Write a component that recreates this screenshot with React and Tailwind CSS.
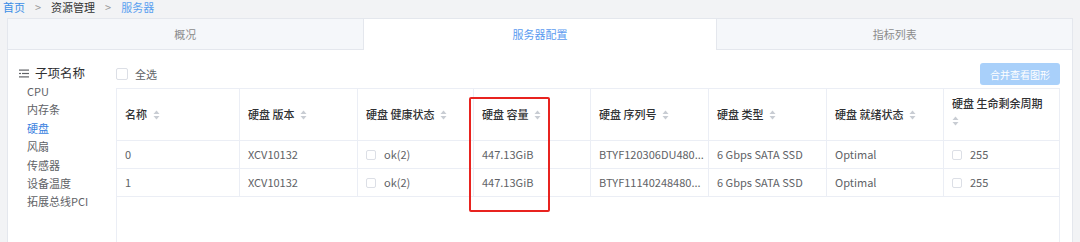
import React from 'react';

const font = { fontFamily: '"Noto Sans CJK SC", "Noto Sans", sans-serif' };

const SortIcon = () => (
  <svg width="7" height="10" viewBox="0 0 7 10" className="shrink-0">
    <path d="M3.5 0.5 L6.5 4 L0.5 4 Z" fill="#c8ccd3" />
    <path d="M3.5 9.5 L6.5 6 L0.5 6 Z" fill="#c8ccd3" />
  </svg>
);

const ListIcon = () => (
  <svg width="10" height="9" viewBox="0 0 10 9" className="shrink-0">
    <rect x="0" y="0.5" width="10" height="1.2" fill="#606266" />
    <rect x="0" y="3.9" width="2" height="1.2" fill="#606266" />
    <rect x="3" y="3.9" width="7" height="1.2" fill="#606266" />
    <rect x="0" y="7.3" width="10" height="1.2" fill="#606266" />
  </svg>
);

const Box = ({ size = 'w-[10px] h-[10px]' }) => (
  <span className={`${size} inline-block shrink-0 border border-[#dcdfe6] bg-white rounded-[2px]`} />
);

const columns = ['名称', '硬盘 版本', '硬盘 健康状态', '硬盘 容量', '硬盘 序列号', '硬盘 类型', '硬盘 就绪状态'];

const rows = [
  ['0', 'XCV10132', 'ok(2)', '447.13GiB', 'BTYF120306DU480...', '6 Gbps SATA SSD', 'Optimal', '255'],
  ['1', 'XCV10132', 'ok(2)', '447.13GiB', 'BTYF11140248480...', '6 Gbps SATA SSD', 'Optimal', '255'],
];

const items = ['CPU', '内存条', '硬盘', '风扇', '传感器', '设备温度', '拓展总线PCI'];

const grid = 'grid grid-cols-[123px_118px_116px_117px_118px_118px_117px_117px]';

export default function App() {
  return (
    <div className="w-[1080px] h-[242px] bg-[#f2f3f5] overflow-hidden relative flex flex-col" style={font}>
      <div className="h-[18px] pl-[3px] pt-[1px] flex items-start gap-[10px] text-[11px] leading-[12px] text-[#606266]">
        <span className="text-[#3a8ee6]">首页</span>
        <span className="text-[#999]">&gt;</span>
        <span className="text-[#333]">资源管理</span>
        <span className="text-[#999]">&gt;</span>
        <span className="text-[#5aa0f0]">服务器</span>
      </div>

      <div className="ml-[7px] w-[1066px] flex-1 bg-white border-l border-r border-t border-[#e4e7ed] flex flex-col">
        <div className="grid grid-cols-3 h-[31px] text-[11px]">
          <div className="bg-[#f5f7fa] border-b border-[#e4e7ed] flex items-center justify-center text-[#8c8c8c]">概况</div>
          <div className="bg-white border-r border-l border-[#e4e7ed] flex items-center justify-center text-[#5b9bf0]">服务器配置</div>
          <div className="bg-[#f5f7fa] border-b border-[#e4e7ed] flex items-center justify-center text-[#8c8c8c]">指标列表</div>
        </div>

        <div className="flex flex-1">
          <div className="w-[108px] pl-[11px] pt-[15px]">
            <div className="h-[16px] flex items-center gap-[6px] text-[12.5px] text-[#303133]">
              <ListIcon />
              <span>子项名称</span>
            </div>
            <div className="pl-[8px] mt-[1px] text-[11px] leading-[18.4px] text-[#606266]">
              {items.map((it) => (
                <div key={it} className={it === '硬盘' ? 'text-[#3a7fe0]' : ''}>{it}</div>
              ))}
            </div>
          </div>

          <div className="flex-1 pt-[13px] flex flex-col">
            <div className="w-[944px] h-[22px] flex items-center justify-between">
              <div className="flex items-center gap-[7px] text-[11px] text-[#606266]">
                <Box size="w-[12px] h-[12px]" />
                <span>全选</span>
              </div>
              <button className="w-[80px] h-[22px] rounded-[3px] bg-[#a9d0fa] text-white text-[10px]">合并查看图形</button>
            </div>

            <div className="mt-[3px] w-[944px] flex-1 border-l border-r border-[#ebeef5] flex flex-col">
              <div className={`${grid} h-[53px] border-t border-b border-[#ebeef5] text-[11px] font-medium text-[#303133]`}>
                {columns.map((c) => (
                  <div key={c} className="border-r border-[#ebeef5] pl-[8px] flex items-center gap-[6px]">
                    <span>{c}</span>
                    <SortIcon />
                  </div>
                ))}
                <div className="pl-[8px] pt-[8px] flex flex-col gap-[7px]">
                  <span className="leading-[12px]">硬盘 生命剩余周期</span>
                  <SortIcon />
                </div>
              </div>
              {rows.map((r, i) => (
                <div key={i} className={`${grid} h-[28px] border-b border-[#ebeef5] text-[11px] text-[#606266]`}>
                  {r.map((v, j) => (
                    <div key={j} className={`${j < 7 ? 'border-r border-[#ebeef5]' : ''} pl-[8px] flex items-center gap-[8px] overflow-hidden whitespace-nowrap`}>
                      {(j === 2 || j === 7) && <Box />}
                      <span>{v}</span>
                    </div>
                  ))}
                </div>
              ))}
            </div>
          </div>
        </div>
      </div>

      <div className="absolute left-[469px] top-[97px] w-[81px] h-[115px] border-2 border-[#e8231f] rounded-[2px]" />
    </div>
  );
}
